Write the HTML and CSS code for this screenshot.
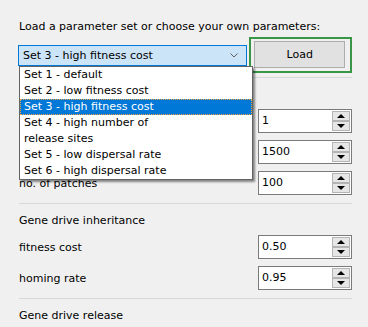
FILE: index.html
```html
<!DOCTYPE html>
<html lang="en">
<head>
    <meta charset="UTF-8">
    <meta name="viewport" content="width=device-width, initial-scale=1.0">
    <title>Parameters</title>
    <link rel="stylesheet" href="styles.css">
</head>
<body>
    <div class="panel">
        <p class="intro">Load a parameter set or choose your own parameters:</p>

        <div class="load-row">
            <div class="combo">
                <span class="combo-text">Set 3 - high fitness cost</span>
                <svg class="chevron" width="8" height="5" viewBox="0 0 8 5">
                    <path d="M0.5 0.5 L4 4 L7.5 0.5" fill="none" stroke="#606060" stroke-width="1"/>
                </svg>

                <!-- open popup of the combo box -->
                <ul class="popup">
                    <li>Set 1 - default</li>
                    <li>Set 2 - low fitness cost</li>
                    <li class="selected">Set 3 - high fitness cost</li>
                    <li>Set 4 - high number of<br>release sites</li>
                    <li>Set 5 - low dispersal rate</li>
                    <li>Set 6 - high dispersal rate</li>
                </ul>
            </div>
            <div class="focus-frame">
                <button class="btn">Load</button>
            </div>
        </div>

        <!-- labels of the first rows are covered by the popup -->
        <section class="group first">
            <h3></h3>
            <div class="row">
                <span></span>
                <div class="spin"><span class="spin-value">1</span><div class="spin-btns"><span class="up"></span><span class="down"></span></div></div>
            </div>
            <div class="row">
                <span></span>
                <div class="spin"><span class="spin-value">1500</span><div class="spin-btns"><span class="up"></span><span class="down"></span></div></div>
            </div>
            <div class="row">
                <span>no. of patches</span>
                <div class="spin"><span class="spin-value">100</span><div class="spin-btns"><span class="up"></span><span class="down"></span></div></div>
            </div>
        </section>

        <section class="group">
            <h3>Gene drive inheritance</h3>
            <div class="row">
                <span>fitness cost</span>
                <div class="spin"><span class="spin-value">0.50</span><div class="spin-btns"><span class="up"></span><span class="down"></span></div></div>
            </div>
            <div class="row">
                <span>homing rate</span>
                <div class="spin"><span class="spin-value">0.95</span><div class="spin-btns"><span class="up"></span><span class="down"></span></div></div>
            </div>
        </section>

        <section class="group">
            <h3>Gene drive release</h3>
        </section>
    </div>
</body>
</html>
```

FILE: styles.css
```css
body {
    margin: 0;
    padding: 0;
    background: #f0f0f0;
    font-family: "DejaVu Sans", sans-serif;
    font-size: 11px;
    color: #000;
    overflow: hidden;
}
.panel {
    width: 333px;
    padding: 19px 0 0 19px;
}
.intro {
    margin: 0 0 2px;
    line-height: 16px;
}
.load-row {
    display: flex;
    align-items: center;
    height: 36px;
    gap: 2px;
}
.combo {
    position: relative;
    box-sizing: border-box;
    width: 233px;
    height: 21px;
    margin-left: -1px;
    border: 1px solid #0078d7;
    background: #cce4f7;
    display: flex;
    align-items: center;
    justify-content: space-between;
    padding: 0 8px 0 4px;
}
.chevron {
    display: block;
}
.popup {
    position: absolute;
    top: 20px;
    left: 0;
    width: 232px;
    margin: 0;
    padding: 0;
    list-style: none;
    background: #fff;
    border: 1px solid #646464;
    box-shadow: 2px 2px 2px rgba(0, 0, 0, 0.45);
    z-index: 2;
}
.popup li {
    line-height: 16px;
    padding: 0 4px;
}
.popup .selected {
    background: #0078d7;
    color: #fff;
    outline: 1px dotted #f5a742;
    outline-offset: -1px;
}
.focus-frame {
    box-sizing: border-box;
    width: 104px;
    height: 36px;
    border: 2px solid #3a9546;
    padding: 2px 5px 3px 3px;
}
.btn {
    display: block;
    width: 100%;
    height: 100%;
    margin: 0;
    border: 1px solid #adadad;
    background: #e1e1e1;
    font: inherit;
    color: #000;
}
.group {
    border-top: 1px solid #d8d8d8;
    padding: 9px 0 8px;
    width: 333px;
}
.group.first {
    margin-top: 4px;
}
.group h3 {
    margin: 0 0 6px;
    height: 16px;
    font-size: inherit;
    font-weight: normal;
    line-height: 16px;
}
.row {
    display: flex;
    justify-content: space-between;
    align-items: center;
    height: 24px;
    margin-bottom: 7px;
}
.row:last-child {
    margin-bottom: 0;
}
.spin {
    box-sizing: border-box;
    width: 94px;
    height: 24px;
    border: 1px solid #7a7a7a;
    background: #fff;
    display: flex;
    justify-content: space-between;
}
.spin-value {
    padding-left: 3px;
    line-height: 22px;
}
.spin-btns {
    display: flex;
    flex-direction: column;
    width: 18px;
    padding: 1px 1px 1px 0;
}
.spin-btns span {
    flex: 1;
    box-sizing: border-box;
    border: 1px solid #b4b4b4;
    background: #e6e6e6;
    position: relative;
}
.spin-btns .up::after,
.spin-btns .down::after {
    content: "";
    position: absolute;
    left: 4px;
    top: 2px;
    border-left: 4px solid transparent;
    border-right: 4px solid transparent;
}
.spin-btns .up::after {
    border-bottom: 4px solid #000;
}
.spin-btns .down::after {
    border-top: 4px solid #000;
}
```
